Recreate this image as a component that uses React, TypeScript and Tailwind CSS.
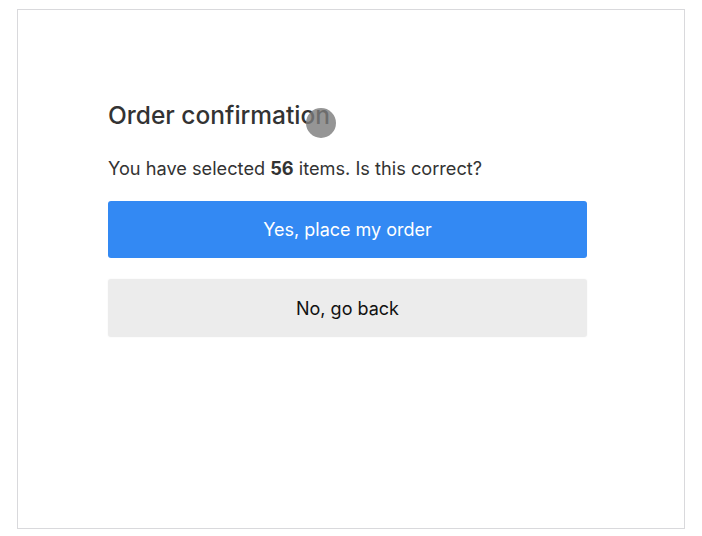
export default function App() {
  return (
    <div
      className="min-h-screen bg-white pl-[17px] pt-[9px]"
      style={{ fontFamily: 'Inter, "Noto Sans", sans-serif' }}
    >
      <div className="relative w-[668px] h-[520px] border border-[#d9d9dc] bg-white">
        <div className="w-[479px] ml-[90px] pt-[90px]">
          {/* Heading */}
          <h1 className="text-[24.5px] leading-[30px] font-medium text-[#333333]">
            Order confirmation
          </h1>
          <p className="mt-[25px] text-[18.2px] leading-[26px] text-[#333333]">
            You have selected <strong className="font-bold">56</strong> items. Is this correct?
          </p>

          {/* Actions */}
          <div className="mt-[20px] flex flex-col gap-[21px]">
            <button className="h-[57px] w-full rounded-[3px] bg-[#3389f3] text-[18px] text-white">
              Yes, place my order
            </button>
            <button className="h-[58px] w-full rounded-[3px] bg-[#ececec] text-[18px] text-[#111111] shadow-[0_0_2px_rgba(0,0,0,0.06)]">
              No, go back
            </button>
          </div>
        </div>

        {/* Touch indicator */}
        <div className="absolute left-[288px] top-[98px] h-[30px] w-[30px] rounded-full bg-[#7a7a7a]/80" />
      </div>
    </div>
  );
}
